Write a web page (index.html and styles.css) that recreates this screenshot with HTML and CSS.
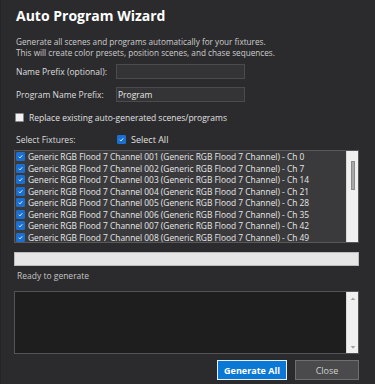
FILE: index.html
```html
<!DOCTYPE html>
<html lang="en">
<head>
    <meta charset="UTF-8">
    <meta name="viewport" content="width=device-width, initial-scale=1.0">
    <title>Auto Program Wizard</title>
    <link rel="stylesheet" href="styles.css">
</head>
<body>
    <div class="wizard">
        <h1 class="title">Auto Program Wizard</h1>
        <p class="intro">Generate all scenes and programs automatically for your fixtures.<br>This will create color presets, position scenes, and chase sequences.</p>

        <div class="form-row">
            <label class="form-label">Name Prefix (optional):</label>
            <div class="text-input"></div>
        </div>
        <div class="form-row">
            <label class="form-label">Program Name Prefix:</label>
            <div class="text-input">Program</div>
        </div>

        <div class="check-row replace-row">
            <span class="box"></span>
            <span>Replace existing auto-generated scenes/programs</span>
        </div>

        <div class="fixtures-head">
            <span class="form-label">Select Fixtures:</span>
            <div class="check-row">
                <span class="box checked"><svg viewBox="0 0 8 8"><path d="M2 4.2 L3.4 5.6 L6 2.6" /></svg></span>
                <span>Select All</span>
            </div>
        </div>

        <div class="fixture-list">
            <ul class="rows">
                <li><span class="box checked"><svg viewBox="0 0 8 8"><path d="M2 4.2 L3.4 5.6 L6 2.6" /></svg></span>Generic RGB Flood 7 Channel 001 (Generic RGB Flood 7 Channel) - Ch 0</li>
                <li><span class="box checked"><svg viewBox="0 0 8 8"><path d="M2 4.2 L3.4 5.6 L6 2.6" /></svg></span>Generic RGB Flood 7 Channel 002 (Generic RGB Flood 7 Channel) - Ch 7</li>
                <li><span class="box checked"><svg viewBox="0 0 8 8"><path d="M2 4.2 L3.4 5.6 L6 2.6" /></svg></span>Generic RGB Flood 7 Channel 003 (Generic RGB Flood 7 Channel) - Ch 14</li>
                <li><span class="box checked"><svg viewBox="0 0 8 8"><path d="M2 4.2 L3.4 5.6 L6 2.6" /></svg></span>Generic RGB Flood 7 Channel 004 (Generic RGB Flood 7 Channel) - Ch 21</li>
                <li><span class="box checked"><svg viewBox="0 0 8 8"><path d="M2 4.2 L3.4 5.6 L6 2.6" /></svg></span>Generic RGB Flood 7 Channel 005 (Generic RGB Flood 7 Channel) - Ch 28</li>
                <li><span class="box checked"><svg viewBox="0 0 8 8"><path d="M2 4.2 L3.4 5.6 L6 2.6" /></svg></span>Generic RGB Flood 7 Channel 006 (Generic RGB Flood 7 Channel) - Ch 35</li>
                <li><span class="box checked"><svg viewBox="0 0 8 8"><path d="M2 4.2 L3.4 5.6 L6 2.6" /></svg></span>Generic RGB Flood 7 Channel 007 (Generic RGB Flood 7 Channel) - Ch 42</li>
                <li><span class="box checked"><svg viewBox="0 0 8 8"><path d="M2 4.2 L3.4 5.6 L6 2.6" /></svg></span>Generic RGB Flood 7 Channel 008 (Generic RGB Flood 7 Channel) - Ch 49</li>
            </ul>
            <div class="scrollbar">
                <div class="thumb"></div>
            </div>
        </div>

        <div class="progress"></div>
        <div class="status">Ready to generate</div>

        <div class="log">
            <div class="log-area"></div>
            <div class="scrollbar arrows">
                <svg viewBox="0 0 8 6"><path d="M1 5 L4 1.5 L7 5 Z" /></svg>
                <svg viewBox="0 0 8 6"><path d="M1 1 L4 4.5 L7 1 Z" /></svg>
            </div>
        </div>

        <div class="actions">
            <button class="btn btn-primary">Generate All</button>
            <button class="btn btn-secondary">Close</button>
        </div>
    </div>
</body>
</html>
```

FILE: styles.css
```css
body {
    margin: 0;
    padding: 0;
    background-color: #2b2b2d;
    font-family: "Open Sans", "Noto Sans", sans-serif;
    color: #d8d8d8;
}

.wizard {
    width: 375px;
    height: 384px;
    box-sizing: border-box;
    padding: 0 16px 0 13px;
    border-left: 1px solid #242426;
    display: flex;
    flex-direction: column;
}

.title {
    margin: 6px 0 0 2px;
    font-size: 14px;
    line-height: 20px;
    font-weight: 700;
    color: #ffffff;
}

.intro {
    margin: 10px 0 0 2px;
    font-size: 8.2px;
    line-height: 11px;
    color: #cdcdcd;
}

.form-row {
    display: flex;
    align-items: center;
    margin-top: 8px;
}

.intro + .form-row {
    margin-top: 6px;
}

.form-label {
    width: 100px;
    padding-left: 2px;
    font-size: 8.5px;
    color: #dedede;
}

.text-input {
    width: 126px;
    height: 13px;
    background-color: #343436;
    border: 1px solid #4b4b4d;
    font-size: 8.5px;
    line-height: 13px;
    padding-left: 1px;
    color: #e6e6e6;
}

.check-row {
    display: flex;
    align-items: center;
    font-size: 8.5px;
    color: #e0e0e0;
}

.replace-row {
    margin-top: 10px;
    padding-left: 1px;
}

.box {
    display: inline-flex;
    width: 7px;
    height: 7px;
    margin-right: 5px;
    background-color: #f2f2f2;
    border: 1px solid #8a8a8a;
    border-radius: 1px;
    flex-shrink: 0;
}

.box.checked {
    background-color: #1b6fd0;
    border-color: #1b6fd0;
}

.box svg {
    width: 7px;
    height: 7px;
    fill: none;
    stroke: #ffffff;
    stroke-width: 1;
}

.fixtures-head {
    display: flex;
    align-items: center;
    margin-top: 10px;
}

.fixtures-head .form-label {
    width: 101px;
}

.fixtures-head .check-row {
    font-size: 9px;
}

.fixture-list {
    display: flex;
    height: 91px;
    margin-top: 4px;
    background-color: #3a3a3c;
    border: 1px solid #58585a;
}

.rows {
    flex: 1;
    list-style: none;
    margin: 0;
    padding: 0 0 0 1px;
    overflow: hidden;
}

.rows li {
    display: flex;
    align-items: center;
    height: 11.5px;
    font-size: 8.4px;
    color: #e8e8e8;
    white-space: nowrap;
}

.rows .box {
    margin-right: 3px;
}

.scrollbar {
    width: 11px;
    background-color: #f0f0f0;
    border-left: 1px solid #dadada;
    display: flex;
    justify-content: center;
}

.thumb {
    width: 2px;
    height: 27px;
    margin-top: 10px;
    background-color: #a8a8a8;
    border: 1px solid #8a8a8a;
}

.progress {
    height: 12px;
    margin-top: 9px;
    background-color: #e6e6e6;
    border: 1px solid #bcbcbc;
}

.status {
    margin-top: 4px;
    padding-left: 3px;
    font-size: 8.5px;
    line-height: 12px;
    color: #c4c4c4;
}

.log {
    display: flex;
    height: 61px;
    margin-top: 9px;
    background-color: #1e1e1e;
    border: 1px solid #545456;
}

.log-area {
    flex: 1;
}

.scrollbar.arrows {
    flex-direction: column;
    align-items: center;
    justify-content: space-between;
    padding: 4px 0 3px;
}

.scrollbar.arrows svg {
    width: 6px;
    height: 5px;
    fill: #a0a0a0;
}

.actions {
    display: flex;
    justify-content: flex-end;
    gap: 8px;
    margin-top: 6px;
}

.btn {
    height: 20px;
    font-family: inherit;
    font-size: 9px;
    padding: 0;
    cursor: pointer;
}

.btn-primary {
    width: 70px;
    background-color: #0a78d4;
    border: 1px solid #e8f1fb;
    color: #ffffff;
    font-weight: 700;
}

.btn-secondary {
    width: 64px;
    background-color: #4a4a4c;
    border: 1px solid #6e6e70;
    color: #d0d0d0;
}
```
